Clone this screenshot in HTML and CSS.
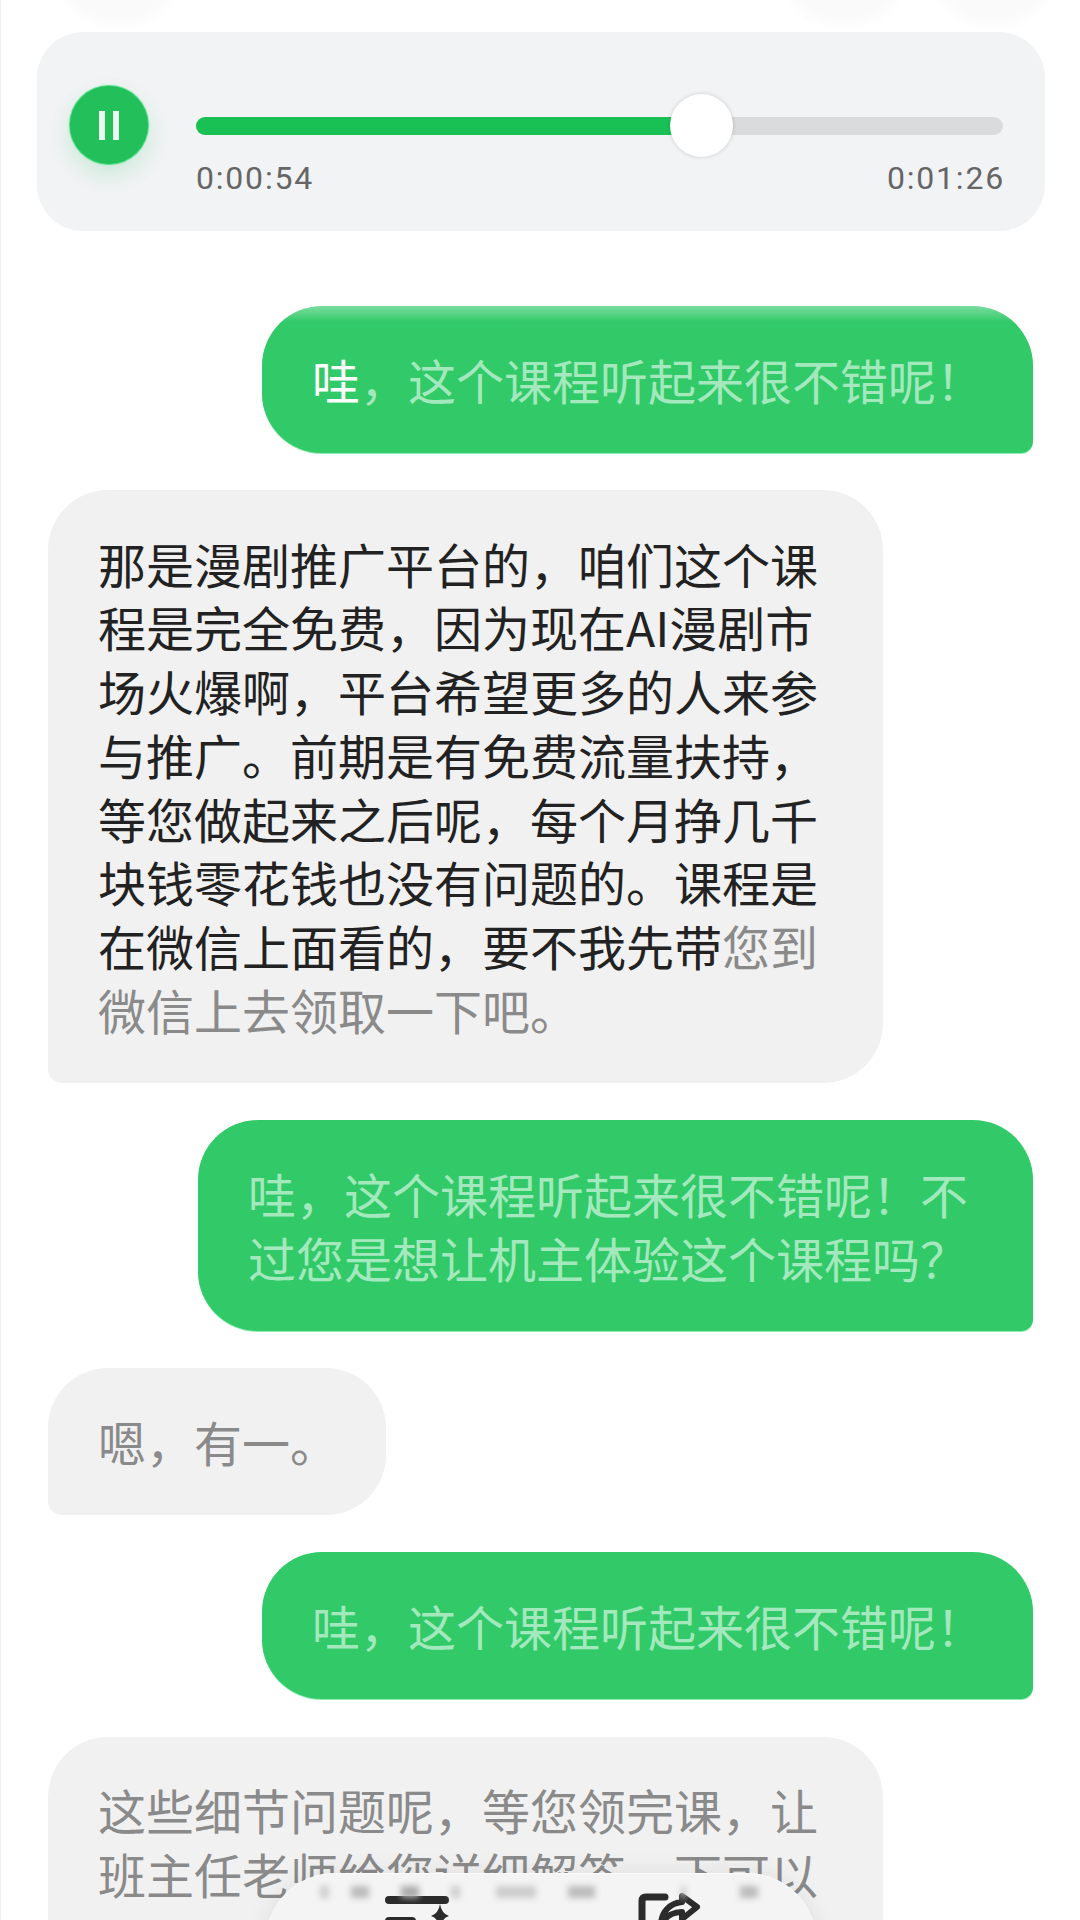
FILE: index.html
```html
<!DOCTYPE html>
<html lang="zh-CN">
<head>
    <meta charset="UTF-8">
    <meta name="viewport" content="width=device-width, initial-scale=1.0">
    <title>通话录音</title>
    <link rel="stylesheet" href="styles.css">
</head>
<body>

    <div class="page">
        <div class="ghost-row">
            <div class="ghost ghost-left"></div>
            <div class="ghost ghost-mid"></div>
            <div class="ghost ghost-right"></div>
        </div>

        <div class="player">
            <div class="play-button">
                <span class="pause-bar"></span>
                <span class="pause-bar"></span>
            </div>
            <div class="player-body">
                <div class="track">
                    <div class="track-fill" style="width: 62.6%">
                        <div class="thumb"></div>
                    </div>
                </div>
                <div class="times">
                    <span>0:00:54</span>
                    <span>0:01:26</span>
                </div>
            </div>
        </div>

        <div class="chat">
            <div class="msg msg-me msg-top-glow"><span class="lit">哇</span>，这个课程听起来很不错呢！</div>

            <div class="msg msg-other msg-wide">那是漫剧推广平台的，咱们这个课程是完全免费，因为现在AI漫剧市场火爆啊，平台希望更多的人来参与推广。前期是有免费流量扶持，等您做起来之后呢，每个月挣几千块钱零花钱也没有问题的。课程是在微信上面看的，要不我先带<span class="dim">您到微信上去领取一下吧。</span></div>

            <div class="msg msg-me msg-wide">哇，这个课程听起来很不错呢！不过您是想让机主体验这个课程吗？</div>

            <div class="msg msg-other msg-short dim">嗯，有一。</div>

            <div class="msg msg-me">哇，这个课程听起来很不错呢！</div>

            <div class="msg msg-other msg-wide dim">这些细节问题呢，等您领完课，让班主任老师给您详细解答一下可以吗？</div>
        </div>

        <div class="float-bar">
            <div class="float-smudge"></div>
            <svg class="icon-summary" width="72" height="32" viewBox="0 0 72 32">
                <rect x="0" y="0" width="64" height="8" rx="4" fill="#2b2b2b"/>
                <rect x="0" y="21" width="31" height="8" rx="4" fill="#2b2b2b"/>
                <path d="M55 8 Q56.500 17.500 64 20 Q56.500 22.500 55 32 Q53.500 22.500 46 20 Q53.500 17.500 55 8Z" fill="#2b2b2b"/>
            </svg>
            <svg class="icon-share" width="64" height="32" viewBox="0 0 64 32">
                <path d="M27 4 H8 Q4 4 4 8 V32" fill="none" stroke="#2b2b2b" stroke-width="7" stroke-linecap="round"/>
                <path d="M44 3 L59 14 L44 26 V19 C34 19 28 23 23 32 C23 19 32 10 44 9Z" fill="none" stroke="#2b2b2b" stroke-width="6" stroke-linejoin="round"/>
            </svg>
        </div>
    </div>

</body>
</html>
```

FILE: styles.css
```css
* {
    box-sizing: border-box;
}

html, body {
    margin: 0;
    padding: 0;
    background-color: #fff;
}

body {
    font-family: "Noto Sans CJK SC", "Noto Sans", sans-serif;
    color: #222;
}

.page {
    position: relative;
    width: 1080px;
    height: 1920px;
    overflow: hidden;
    border-left: 1px solid #f0f0f0;
}

/* what is left of the buttons scrolled off the top */
.ghost-row {
    height: 32px;
    overflow: hidden;
    position: relative;
    display: flex;
    align-items: flex-end;
    padding-left: 62px;
}

.ghost {
    width: 110px;
    height: 80px;
    margin-bottom: 8px;
    border-radius: 50%;
    background-color: #fafafa;
    filter: blur(6px);
    flex-shrink: 0;
}

.ghost-mid {
    margin-left: 616px;
}

.ghost-right {
    margin-left: 40px;
}

.player {
    display: flex;
    width: 1008px;
    height: 199px;
    margin-left: 36px;
    padding: 54px 42px 0 33px;
    background-color: #f2f3f5;
    border-radius: 46px;
}

.play-button {
    display: flex;
    justify-content: center;
    align-items: center;
    gap: 8px;
    width: 78px;
    height: 78px;
    flex-shrink: 0;
    background-color: #22bf5b;
    border-radius: 50%;
    box-shadow: 0 0 1px 1px #43dc7c, 0 10px 26px rgba(34, 191, 91, 0.2);
}

.pause-bar {
    width: 6px;
    height: 29px;
    background-color: #e9fbef;
}

.player-body {
    flex: 1;
    margin-left: 48px;
    padding-top: 31px;
}

.track {
    height: 18px;
    background-color: #dadbdd;
    border-radius: 9px;
}

.track-fill {
    position: relative;
    height: 18px;
    background-color: #19c155;
    border-radius: 9px 0 0 9px;
}

.thumb {
    position: absolute;
    right: -32px;
    top: -23px;
    width: 63px;
    height: 63px;
    background-color: #fff;
    border-radius: 50%;
    box-shadow: 0 0 4px rgba(0, 0, 0, 0.16);
}

.times {
    display: flex;
    justify-content: space-between;
    margin: 25px -2px 0 0;
    font-family: Roboto, sans-serif;
    font-size: 32px;
    line-height: 36px;
    letter-spacing: 1.8px;
    color: #666;
}

.chat {
    display: flex;
    flex-direction: column;
    gap: 37.5px;
    padding: 75px 47px 0 47px;
}

.msg {
    padding: 41.5px 40px 41.5px 50px;
    font-size: 48px;
    line-height: 63.7px;
    border-radius: 60px;
}

.msg-wide {
    width: 835px;
}

.msg-short {
    width: 338px;
}

.msg-me {
    align-self: flex-end;
    width: 771px;
    background-color: #32ca69;
    color: #a4e8bd;
    border-bottom-right-radius: 12px;
    box-shadow: 0 1px 0 #8eedb2;
}

.msg-me.msg-wide {
    width: 835px;
}

.msg-top-glow {
    background-image: linear-gradient(#7bdc9f, #32ca69 16px);
}

.lit {
    color: #fff;
}

.msg-other {
    align-self: flex-start;
    background-color: #f1f1f1;
    border-bottom-left-radius: 14px;
}

.dim {
    color: #8a8a8a;
}

/* floating toolbar, cut by the bottom of the screen */
.float-bar {
    position: absolute;
    left: 264px;
    top: 1873px;
    display: flex;
    width: 552px;
    height: 70px;
    padding: 22px 0 0 120px;
    background-color: #f4f4f4;
    border-top: 1px solid #fbfbfb;
    border-radius: 70px 70px 0 0;
    box-shadow: 0 0 24px rgba(0, 0, 0, 0.08);
}

.float-smudge {
    position: absolute;
    left: 50px;
    right: 50px;
    top: 12px;
    height: 12px;
    filter: blur(3px);
    background-image: linear-gradient(90deg,
        transparent 0, transparent 1%,
        #ccc 1%, #ccc 3%, transparent 3%, transparent 8%,
        #bbb 8%, #bbb 12%, transparent 12%, transparent 19%,
        #aaa 19%, #aaa 23%, transparent 23%, transparent 30%,
        #ccc 30%, #ccc 32%, transparent 32%, transparent 40%,
        #ccc 40%, #ccc 49%, transparent 49%, transparent 56%,
        #bbb 56%, #bbb 62%, transparent 62%, transparent 81%,
        #ccc 81%, #ccc 82%, transparent 82%, transparent 94%,
        #bbb 94%, #bbb 98%, transparent 98%);
}

.icon-share {
    margin-left: 181px;
    margin-top: -3px;
}
```
